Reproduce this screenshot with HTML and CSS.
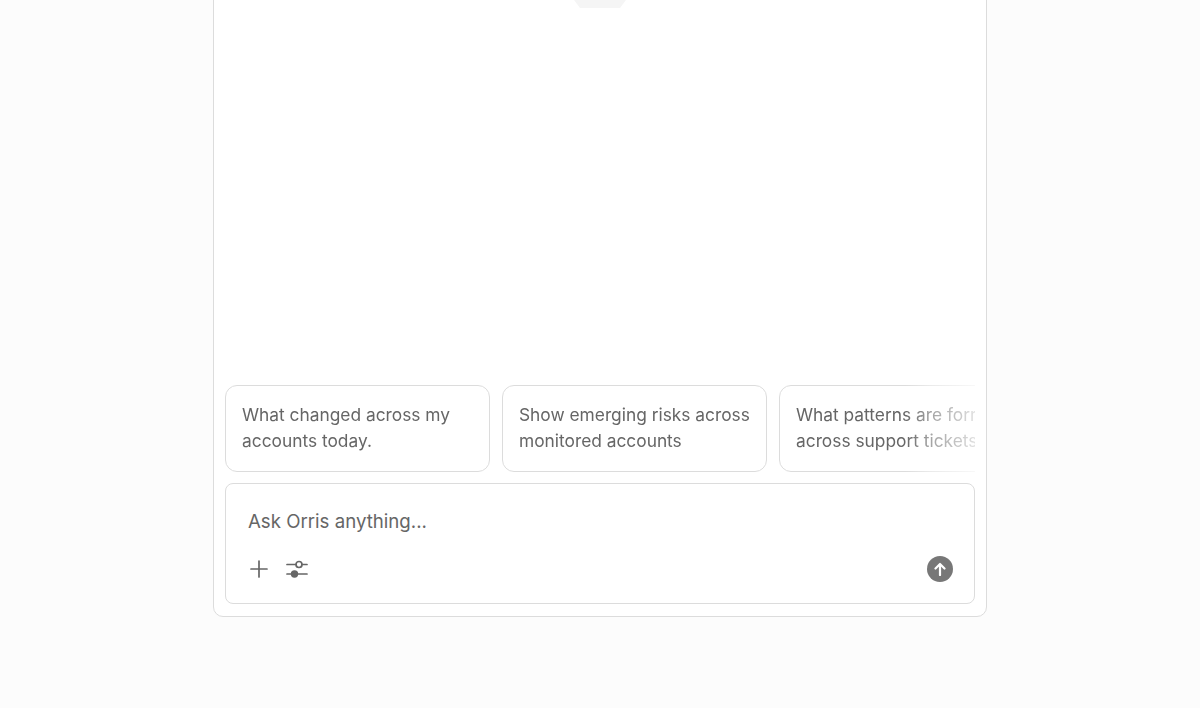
FILE: index.html
```html
<!DOCTYPE html>
<html lang="en">
<head>
    <meta charset="UTF-8">
    <meta name="viewport" content="width=device-width, initial-scale=1.0">
    <title>Orris</title>
    <link rel="stylesheet" href="styles.css">
</head>
<body>
    <main class="panel">
        <div class="scroll-tab"></div>
        <div class="suggestions">
            <button class="suggestion">What changed across my accounts today.</button>
            <button class="suggestion">Show emerging risks across monitored accounts</button>
            <button class="suggestion">What patterns are forming across support tickets</button>
        </div>
        <form class="composer">
            <div class="composer-input">Ask Orris anything...</div>
            <div class="composer-tools">
                <button type="button" class="tool tool-add" aria-label="Add">
                    <svg width="18" height="18" viewBox="0 0 18 18" fill="none" stroke="#666" stroke-width="1.7" stroke-linecap="round">
                        <path d="M9 1v16M1 9h16"/>
                    </svg>
                </button>
                <button type="button" class="tool" aria-label="Settings">
                    <svg width="22" height="18" viewBox="0 0 22 18" fill="none" stroke="#666" stroke-width="1.7" stroke-linecap="round">
                        <path d="M1 4.5h9M16 4.5h5M1 14h5M12 14h9"/>
                        <circle cx="13" cy="4.5" r="3"/>
                        <circle cx="8.5" cy="14" r="3.7" fill="#666" stroke="none"/>
                    </svg>
                </button>
                <button type="button" class="send" aria-label="Send">
                    <svg width="14" height="14" viewBox="0 0 14 14" fill="none" stroke="#fff" stroke-width="2.2" stroke-linecap="round" stroke-linejoin="round">
                        <path d="M7 13V2M2.5 6.5 7 2l4.5 4.5"/>
                    </svg>
                </button>
            </div>
        </form>
    </main>
</body>
</html>
```
FILE: styles.css
```css
html, body {
    height: 100%;
}
body {
    margin: 0;
    display: flex;
    flex-direction: column;
    align-items: center;
    overflow: hidden;
    background-color: #fcfcfc;
    font-family: Inter, "Liberation Sans", sans-serif;
    color: #666;
}
button {
    font-family: inherit;
}
.panel {
    position: relative;
    box-sizing: border-box;
    flex: 1;
    width: 774px;
    margin-top: -20px;
    margin-bottom: 91.5px;
    padding: 12px 11px 12px;
    display: flex;
    flex-direction: column;
    justify-content: flex-end;
    gap: 11px;
    background-color: white;
    border: 1px solid #dcdcdc;
    border-radius: 10px;
}
.scroll-tab {
    position: absolute;
    top: 0;
    left: 360px;
    width: 52px;
    height: 27px;
    background-color: #f5f5f5;
    clip-path: polygon(0 0, 100% 0, 100% 19px, 46px 100%, 6px 100%, 0 19px);
}
.suggestions {
    --fade: linear-gradient(to right, black calc(100% - 70px), rgba(0, 0, 0, 0.6) calc(100% - 45px), rgba(0, 0, 0, 0.35) calc(100% - 15px), rgba(0, 0, 0, 0.2));
    display: flex;
    gap: 12px;
    overflow: hidden;
    -webkit-mask-image: var(--fade);
    mask-image: var(--fade);
}
.suggestion {
    flex: 0 0 265px;
    box-sizing: border-box;
    height: 87px;
    padding: 16px 16px 17px;
    background-color: white;
    border: 1px solid #dcdcdc;
    border-radius: 12px;
    color: #666;
    font-size: 17.33px;
    line-height: 26px;
    text-align: left;
}
.composer {
    box-sizing: border-box;
    height: 121px;
    padding: 25px 22px 21px;
    display: flex;
    flex-direction: column;
    justify-content: space-between;
    border: 1px solid #dcdcdc;
    border-radius: 8px;
}
.composer-input {
    font-size: 18.67px;
    line-height: 24px;
    padding-top: 1px;
}
.composer-tools {
    display: flex;
    align-items: center;
    gap: 18px;
}
.tool {
    display: flex;
    padding: 0;
    border: none;
    background: none;
}
.tool-add {
    margin-left: 2px;
}
.send {
    margin-left: auto;
    margin-right: -1px;
    width: 26px;
    height: 26px;
    display: flex;
    align-items: center;
    justify-content: center;
    padding: 0;
    border: none;
    border-radius: 50%;
    background-color: #777;
}
```
